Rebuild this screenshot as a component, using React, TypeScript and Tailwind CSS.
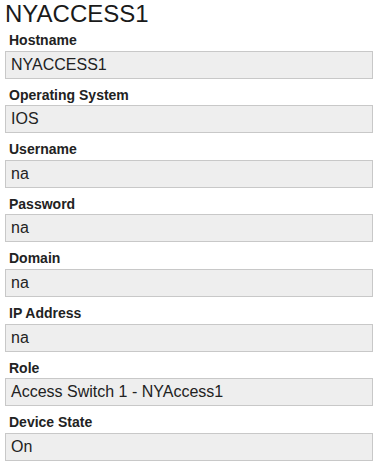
import React from "react";

const fields: [string, string][] = [
  ["Hostname", "NYACCESS1"],
  ["Operating System", "IOS"],
  ["Username", "na"],
  ["Password", "na"],
  ["Domain", "na"],
  ["IP Address", "na"],
  ["Role", "Access Switch 1 - NYAccess1"],
  ["Device State", "On"],
];

export default function App() {
  return (
    <div
      className="w-[378px] h-[468px] bg-white px-[5px] overflow-hidden text-[#222]"
      style={{ fontFamily: '"Liberation Sans", Arial, Helvetica, sans-serif' }}
    >
      <h1 className="text-[24px] leading-[27px] font-normal m-0 text-[#1a1a1a]">NYACCESS1</h1>
      <div className="flex flex-col">
        {fields.map(([label, value]) => (
          <div key={label} className="flex flex-col">
            <div className="mt-[5px] mb-[2.6px] pl-[4px] text-[14px] leading-[16px] font-bold text-[#222]">
              {label}
            </div>
            <div className="h-[28px] border border-[#c8c8c8] bg-[#eeeeee] px-[5px] flex items-center text-[16px] text-[#222]">
              {value}
            </div>
            <div className="h-[3px]" />
          </div>
        ))}
      </div>
    </div>
  );
}
